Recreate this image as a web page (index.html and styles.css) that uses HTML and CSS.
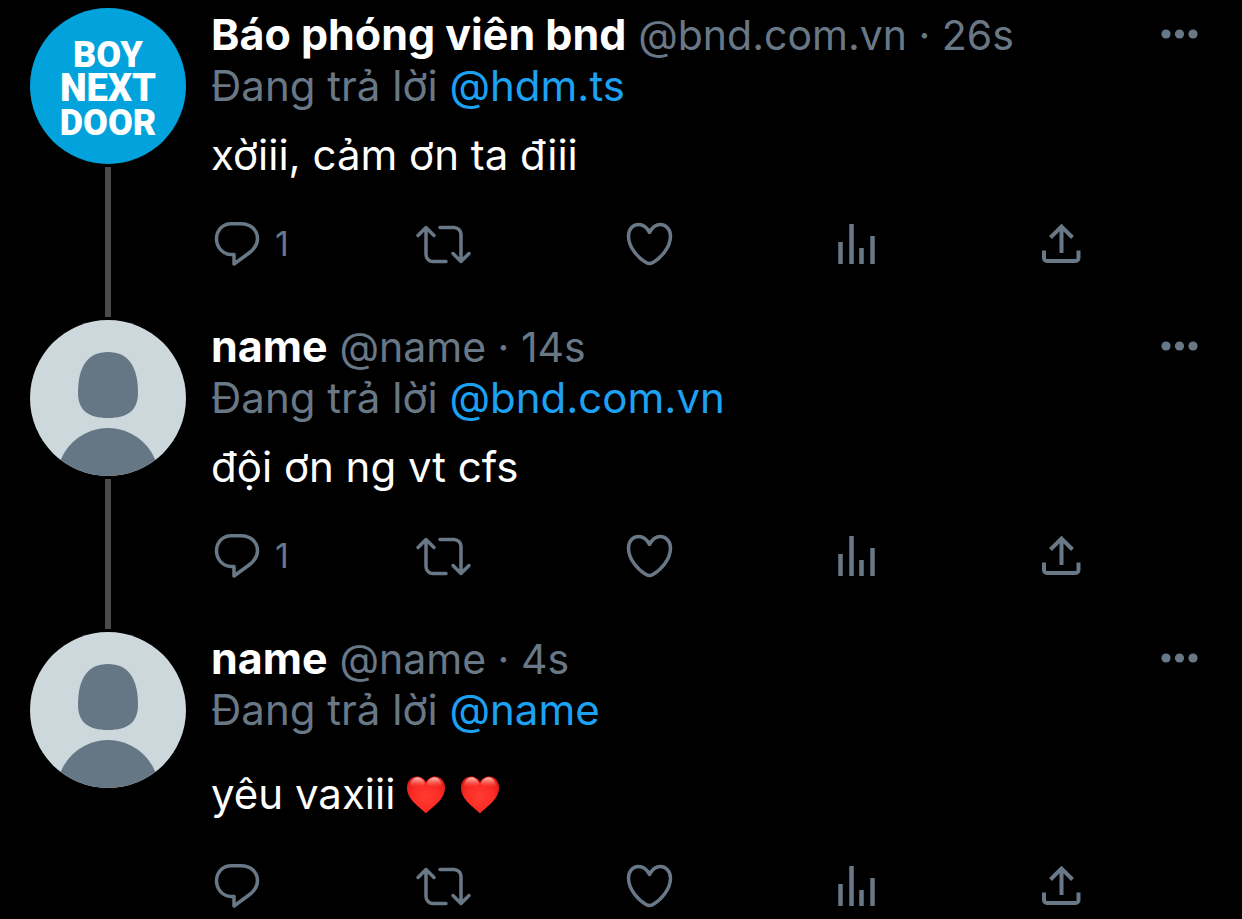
FILE: index.html
```html
<!DOCTYPE html>
<html lang="vi">

<head>
    <meta charset="UTF-8">
    <meta name="viewport" content="width=device-width, initial-scale=1.0">
    <title>Thread</title>
    <link rel="stylesheet" href="styles.css">
</head>

<body>
    <!-- Shared icons -->
    <svg class="sprite" aria-hidden="true">
        <defs>
            <radialGradient id="heart-red" cx="50%" cy="55%" r="60%">
                <stop offset="0" stop-color="#ff3b30" />
                <stop offset="0.6" stop-color="#fb2c25" />
                <stop offset="1" stop-color="#e01b16" />
            </radialGradient>
            <linearGradient id="heart-shine" x1="0" y1="0" x2="0" y2="1">
                <stop offset="0" stop-color="#ffc9c0" />
                <stop offset="1" stop-color="#ff6a5c" stop-opacity="0" />
            </linearGradient>
        </defs>
        <symbol id="reply" viewBox="0 0 52 48">
            <path d="M20 3.7H30C39.5 3.7 46.5 10 46.5 18.5C46.5 24.5 43.5 29 38 33L23 44V34.5H20C12 34.5 5.5 27.5 5.5 18.8C5.5 10 12 3.7 20 3.7Z" />
        </symbol>
        <symbol id="retweet" viewBox="0 0 52 48" overflow="visible">
            <path d="M1 15.5L9 7.5L17 15.5M9 8V34.5a7 7 0 0 0 7 7H29M23 7.5H37a7 7 0 0 1 7 7V41M36 33.5L44 41.5L52 33.5" />
        </symbol>
        <symbol id="like" viewBox="0 0 52 48">
            <path d="M26.5 12.5C24 7.5 20 4.5 15.5 4.5C9.5 4.5 5.5 9.5 5.5 16C5.5 28 16 38.5 23 42.5Q26.5 44.5 30 42.5C37 38.5 47.5 28 47.5 16C47.5 9.5 43 4.5 37.5 4.5C33 4.5 29 7.5 26.5 12.5Z" />
        </symbol>
        <symbol id="stats" viewBox="0 0 52 48">
            <path class="bars" d="M10.5 22V44M21.5 4V44M31.5 28V44M42.5 16V44" />
        </symbol>
        <symbol id="share" viewBox="0 0 52 48">
            <path class="tray" d="M25.5 33V7M14.5 17.500L25.5 6.500L36.5 17.500M8 30.5V38a3 3 0 0 0 3 3H39.5a3 3 0 0 0 3-3V30.5" />
        </symbol>
        <symbol id="dots" viewBox="0 0 37 10">
            <circle cx="5" cy="5" r="4.6" />
            <circle cx="18.5" cy="5" r="4.6" />
            <circle cx="32" cy="5" r="4.6" />
        </symbol>
        <symbol id="person" viewBox="0 0 156 156">
            <rect width="156" height="156" fill="#cdd8dd" />
            <path fill="#657785" d="M78 32C98 32 108 46 108 73C108 90 98 98 78 98C58 98 48 90 48 73C48 46 58 32 78 32Z" />
            <circle fill="#657785" cx="78" cy="159" r="51" />
        </symbol>
        <symbol id="red-heart" viewBox="0 0 38 38">
            <path fill="url(#heart-red)" d="M19 37.5C13 31 0 24 0 11.5C0 5 4.5 0.5 10 0.5C14 0.5 17.5 3 19 6.5C20.5 3 24 0.5 28 0.5C33.5 0.5 38 5 38 11.5C38 24 25 31 19 37.5Z" />
            <path fill="url(#heart-shine)" d="M3 9C4 4 7 1.5 10.5 1.5C14 1.5 17 4 18 8C15 12 5 12 3 9ZM20 8C21 4 24 1.5 27.5 1.5C31 1.5 34 4 35 9C33 12 23 12 20 8Z" />
        </symbol>
    </svg>

    <main class="thread">
        <article class="tweet">
            <div class="side">
                <svg class="avatar brand" viewBox="0 0 156 156" role="img" aria-label="Boy Next Door">
                    <rect width="156" height="156" />
                    <text x="78" y="59">BOY</text>
                    <text class="wide" x="78" y="93">NEXT</text>
                    <text x="78" y="127">DOOR</text>
                </svg>
                <div class="line"></div>
            </div>
            <div class="content">
                <header class="header">
                    <div class="user"><strong>Báo phóng viên bnd</strong> <span>@bnd.com.vn · 26s</span></div>
                    <button class="more" aria-label="More"><svg><use href="#dots" /></svg></button>
                </header>
                <div class="replying">Đang trả lời <a href="#">@hdm.ts</a></div>
                <p class="text">xờiii, cảm ơn ta điii</p>
                <div class="actions">
                    <button aria-label="Reply"><svg><use href="#reply" /></svg><span>1</span></button>
                    <button aria-label="Retweet"><svg><use href="#retweet" /></svg></button>
                    <button aria-label="Like"><svg><use href="#like" /></svg></button>
                    <button aria-label="Stats"><svg><use href="#stats" /></svg></button>
                    <button aria-label="Share"><svg><use href="#share" /></svg></button>
                </div>
            </div>
        </article>

        <article class="tweet">
            <div class="side">
                <svg class="avatar"><use href="#person" /></svg>
                <div class="line"></div>
            </div>
            <div class="content">
                <header class="header">
                    <div class="user"><strong>name</strong> <span>@name · 14s</span></div>
                    <button class="more" aria-label="More"><svg><use href="#dots" /></svg></button>
                </header>
                <div class="replying">Đang trả lời <a href="#">@bnd.com.vn</a></div>
                <p class="text">đội ơn ng vt cfs</p>
                <div class="actions">
                    <button aria-label="Reply"><svg><use href="#reply" /></svg><span>1</span></button>
                    <button aria-label="Retweet"><svg><use href="#retweet" /></svg></button>
                    <button aria-label="Like"><svg><use href="#like" /></svg></button>
                    <button aria-label="Stats"><svg><use href="#stats" /></svg></button>
                    <button aria-label="Share"><svg><use href="#share" /></svg></button>
                </div>
            </div>
        </article>

        <article class="tweet last">
            <div class="side">
                <svg class="avatar"><use href="#person" /></svg>
            </div>
            <div class="content">
                <header class="header">
                    <div class="user"><strong>name</strong> <span>@name · 4s</span></div>
                    <button class="more" aria-label="More"><svg><use href="#dots" /></svg></button>
                </header>
                <div class="replying">Đang trả lời <a href="#">@name</a></div>
                <p class="text">yêu vaxiii <svg class="emoji"><use href="#red-heart" /></svg> <svg class="emoji"><use href="#red-heart" /></svg></p>
                <div class="actions">
                    <button aria-label="Reply"><svg><use href="#reply" /></svg></button>
                    <button aria-label="Retweet"><svg><use href="#retweet" /></svg></button>
                    <button aria-label="Like"><svg><use href="#like" /></svg></button>
                    <button aria-label="Stats"><svg><use href="#stats" /></svg></button>
                    <button aria-label="Share"><svg><use href="#share" /></svg></button>
                </div>
            </div>
        </article>
    </main>
</body>

</html>
```
FILE: styles.css
```css
body {
    margin: 0;
    background-color: #000;
    color: #fff;
    font-family: Inter, 'Liberation Sans', sans-serif;
    font-size: 42px;
    line-height: 52px;
}

.sprite {
    position: absolute;
    width: 0;
    height: 0;
}

.thread {
    padding-top: 8px;
}

.tweet {
    display: flex;
    gap: 25px;
    padding-left: 30px;
}

/* Avatar and thread line */
.side {
    display: flex;
    flex-direction: column;
    align-items: center;
    width: 156px;
    flex-shrink: 0;
}

.avatar {
    width: 156px;
    height: 156px;
    border-radius: 50%;
}

.brand rect {
    fill: #02a3dd;
}

.brand text {
    fill: #fff;
    font-family: Roboto, sans-serif;
    font-size: 36px;
    font-weight: 900;
    text-anchor: middle;
}

.brand .wide {
    font-size: 38px;
}

.line {
    flex: 1;
    width: 6px;
    margin: 3px 0;
    background-color: #4a4a4a;
}

/* Tweet content */
.content {
    flex: 1;
    min-width: 0;
    padding-bottom: 52px;
}

.last .content {
    padding-bottom: 8px;
}

.header {
    display: flex;
    justify-content: space-between;
    align-items: center;
    height: 52px;
    padding-right: 44px;
}

.user,
.replying {
    color: #697886;
    white-space: nowrap;
}

.user strong {
    color: #fff;
    font-size: 43px;
    font-weight: 700;
}

.user span {
    font-size: 41px;
}

.replying a {
    color: #1da1f2;
    text-decoration: none;
}

.text {
    margin: 17px 0 39px;
}

.last .text {
    margin: 32px 0 42px;
}

.emoji {
    width: 38px;
    height: 38px;
    margin-right: 4px;
    vertical-align: -5px;
}

button {
    padding: 0;
    border: none;
    background: none;
    color: #697886;
    font: inherit;
    cursor: pointer;
}

.more {
    display: flex;
}

.more svg {
    width: 37px;
    height: 10px;
    fill: #697886;
}

.actions {
    display: grid;
    grid-template-columns: repeat(5, 1fr);
}

.actions button {
    display: flex;
    align-items: center;
    gap: 12px;
    height: 48px;
    font-size: 34px;
}

.actions svg {
    width: 52px;
    height: 48px;
    overflow: visible;
    fill: none;
    stroke: #697886;
    stroke-width: 3.5px;
    stroke-linecap: round;
    stroke-linejoin: round;
}

.bars {
    stroke-width: 4.5px;
    stroke-linecap: butt;
}

.tray {
    stroke-width: 4px;
    stroke-linecap: butt;
    stroke-linejoin: miter;
}
```
